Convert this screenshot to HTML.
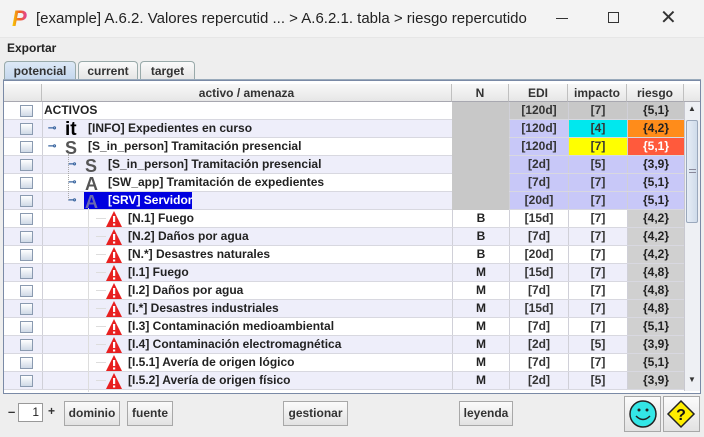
<!DOCTYPE html>
<html><head><meta charset="utf-8"><style>
*{box-sizing:border-box;margin:0;padding:0}
body{width:704px;height:437px;overflow:hidden;background:#eeeeee;font-family:"Liberation Sans",Arial,sans-serif;position:relative}
.abs{position:absolute}
.title{left:0;top:0;width:704px;height:38px;background:#f3f3f3;border-bottom:1px solid #e6e6e6}
.menu{left:0;top:38px;width:704px;height:21px;background:#eeeeee;font-size:12px;font-weight:bold;color:#222;padding:3px 0 0 7px}
.tab{top:61px;height:19px;border:1px solid #9aa;border-bottom:none;border-radius:4px 4px 0 0;font-size:12px;font-weight:bold;color:#333;text-align:center;padding-top:2px;background:linear-gradient(#fafafa,#e4e4e4)}
.tab.sel{background:linear-gradient(#dde9f6,#c2d6ec);height:20px}
.frame{left:3px;top:80px;width:698px;height:314px;border:1px solid #7a8aa6;background:#fff}
.row{position:absolute;left:4px;width:680px;height:18px;font-size:12px;font-weight:bold;color:#222;border-bottom:1px solid #d8d8e0}
.row div{position:absolute;top:0;height:17px;line-height:17px}
.c{text-align:center}
.cb{left:16px;top:3px!important;width:13px;height:12px!important;border:1px solid #8a9ab0;background:linear-gradient(#fff,#cfd9e6)}
.vl{border-left:1px solid #d0d0d8}
.hdr{position:absolute;top:84px;height:18px;background:linear-gradient(#f8f8f8,#e6e6e6);border-right:1px solid #c0c0c0;border-bottom:1px solid #a8a8b0;font-size:12px;font-weight:bold;color:#333;text-align:center;line-height:18px}
.btn{position:absolute;top:401px;height:25px;border:1px solid #a8a8a8;background:linear-gradient(#fbfbfb,#e2e2e2);font-size:12px;font-weight:bold;color:#333;text-align:center;line-height:23px}
</style></head><body>
<div class="abs title"></div>
<div class="abs" style="left:12px;top:6px;font-size:22px;font-weight:bold;font-style:italic;font-family:'Liberation Sans',sans-serif;background:linear-gradient(90deg,#f7d400,#f06020,#e040a0);-webkit-background-clip:text;color:transparent">P</div>
<div class="abs" style="left:36px;top:10px;font-size:15px;color:#222">[example] A.6.2. Valores repercutid ... &gt; A.6.2.1. tabla &gt; riesgo repercutido</div>
<div class="abs" style="left:556px;top:18px;width:12px;height:1px;background:#333"></div>
<div class="abs" style="left:608px;top:12px;width:11px;height:11px;border:1px solid #333"></div>
<div class="abs" style="left:660px;top:5px;font-size:20px;color:#333">✕</div>
<div class="abs menu">Exportar</div>
<div class="abs tab sel" style="left:4px;width:72px">potencial</div>
<div class="abs tab" style="left:78px;width:60px">current</div>
<div class="abs tab" style="left:140px;width:55px">target</div>
<div class="abs" style="left:3px;top:79px;width:698px;height:1px;background:#9ab"></div>
<div class="abs frame"></div>
<div class="hdr" style="left:4px;width:38px"></div>
<div class="hdr" style="left:42px;width:410px">activo / amenaza</div>
<div class="hdr" style="left:452px;width:57px">N</div>
<div class="hdr" style="left:509px;width:59px">EDI</div>
<div class="hdr" style="left:568px;width:59px">impacto</div>
<div class="hdr" style="left:627px;width:57px">riesgo</div>
<div class="hdr" style="left:684px;width:16px;border-right:none"></div>
<div class="abs" style="left:684px;top:102px;width:16px;height:289px;background:#eef0f4;border-left:1px solid #c8c8d0"></div>
<div class="abs" style="left:686px;top:104px;width:12px;height:14px;font-size:8px;text-align:center;color:#333">▲</div>
<div class="abs" style="left:686px;top:120px;width:12px;height:103px;border:1px solid #9aa8bc;background:linear-gradient(90deg,#e6edf6,#cfdbea);border-radius:2px"></div>
<div class="abs" style="left:689px;top:169px;width:7px;height:4px;border-top:1px solid #889;border-bottom:1px solid #889"></div>
<div class="abs" style="left:686px;top:375px;width:12px;height:14px;font-size:8px;text-align:center;color:#333">▼</div>
<div id="rows"></div>
<script>
const L='#c8c8f8',G='#c8c8c8',A='#eeeefa';
const rows=[
["ACTIVOS",0,'',"[120d]","[7]","{5,1}",G,G,G,null,null],
["[INFO] Expedientes en curso",1,'it',"[120d]","[4]","{4,2}",L,'#00e8ee','#ff8c1a'],
["[S_in_person] Tramitación presencial",1,'S',"[120d]","[7]","{5,1}",L,'#ffff00','#ff5a3c','#fff'],
["[S_in_person] Tramitación presencial",2,'S',"[2d]","[5]","{3,9}",L,L,L],
["[SW_app] Tramitación de expedientes",2,'A',"[7d]","[7]","{5,1}",L,L,L],
["[SRV] Servidor",2,'A',"[20d]","[7]","{5,1}",L,L,L,null,1],
["[N.1] Fuego",3,'B',"[15d]","[7]","{4,2}"],
["[N.2] Daños por agua",3,'B',"[7d]","[7]","{4,2}"],
["[N.*] Desastres naturales",3,'B',"[20d]","[7]","{4,2}"],
["[I.1] Fuego",3,'M',"[15d]","[7]","{4,8}"],
["[I.2] Daños por agua",3,'M',"[7d]","[7]","{4,8}"],
["[I.*] Desastres industriales",3,'M',"[15d]","[7]","{4,8}"],
["[I.3] Contaminación medioambiental",3,'M',"[7d]","[7]","{5,1}"],
["[I.4] Contaminación electromagnética",3,'M',"[2d]","[5]","{3,9}"],
["[I.5.1] Avería de origen lógico",3,'M',"[7d]","[7]","{5,1}"],
["[I.5.2] Avería de origen físico",3,'M',"[2d]","[5]","{3,9}"]];
let h='';
rows.forEach((r,i)=>{
 const y=102+i*18, bg=i%2?A:'#fff';
 h+=`<div class="row" style="top:${y}px;background:${bg}">`;
 h+=`<div class="cb"></div><div class="vl" style="left:38px;width:1px"></div>`;
 const lv=r[1];
 if(lv==0){h+=`<div style="left:40px">ACTIVOS</div>`;}
 else if(lv<3){
  const x=lv==1?44:64;
  h+=`<div style="left:${x}px;color:#3a66a0;font-size:10px">⊸</div>`;
  const big=r[2]=='it';
  h+=`<div style="left:${x+17}px;font-size:${big?19:18}px;color:${big?'#000':'#555'};top:${big?0:1}px;line-height:${big?20:19}px;font-weight:bold">${r[2]}</div>`;
  if(r[10]) h+=`<div style="left:80px;width:108px;background:#0000e0"></div><div style="left:${x+17}px;font-size:18px;top:1px;color:#6a6ab0;line-height:19px;font-weight:bold">A</div>`;
  h+=`<div style="left:${x+40}px;${r[10]?'color:#fff':''}">${r[0]}</div>`;
 } else {
  h+=`<div style="left:92px;top:8px!important;width:10px;height:1px!important;background:#ddd"></div>`;
  h+=`<svg style="position:absolute;left:101px;top:0" width="18" height="17"><path d="M9 1 L17 17 L1 17 Z" fill="#e82020"/><rect x="8" y="6" width="2.2" height="6" fill="#fff"/><rect x="8" y="13.5" width="2.2" height="2" fill="#fff"/></svg>`;
  h+=`<div style="left:124px">${r[0]}</div>`;
 }
 if(i<6) h+=`<div style="left:448px;width:57px;height:18px!important;background:${G}"></div>`;
 else h+=`<div class="c vl" style="left:448px;width:57px">${r[2]}</div>`;
 h+=`<div class="c vl" style="left:505px;width:59px;background:${r[6]||'transparent'};color:#333">${r[3]}</div>`;
 h+=`<div class="c vl" style="left:564px;width:59px;background:${r[7]||'transparent'};color:#333">${r[4]}</div>`;
 h+=`<div class="c vl" style="left:623px;width:57px;background:${r[8]||'#d0d0d0'};color:${r[9]||'#222'}">${r[5]}</div>`;
 h+='</div>';
});
document.getElementById('rows').innerHTML=h;
</script>
<div class="abs" style="left:68px;top:154px;width:1px;height:46px;border-left:1px dotted #aaa"></div>
<div class="abs" style="left:88px;top:208px;width:1px;height:184px;border-left:1px solid #ddd"></div>
<div class="abs" style="left:0;top:394px;width:704px;height:43px;background:#eeeeee"></div>
<div class="abs" style="left:8px;top:404px;font-size:13px;font-weight:bold;color:#333">–</div>
<div class="abs" style="left:18px;top:403px;width:25px;height:19px;border:1px solid #999;background:#fff;font-size:12px;text-align:right;padding-right:3px;line-height:17px;color:#222">1</div>
<div class="abs" style="left:48px;top:404px;font-size:12px;font-weight:bold;color:#333">+</div>
<div class="btn" style="left:64px;width:56px">dominio</div>
<div class="btn" style="left:127px;width:46px">fuente</div>
<div class="btn" style="left:283px;width:65px">gestionar</div>
<div class="btn" style="left:459px;width:54px">leyenda</div>
<div class="btn" style="left:624px;top:396px;width:37px;height:36px"></div>
<div class="btn" style="left:663px;top:396px;width:37px;height:36px"></div>
<svg class="abs" style="left:628px;top:399px" width="30" height="30"><circle cx="15" cy="15" r="13" fill="#33e6e6" stroke="#222" stroke-width="1.5"/><circle cx="11" cy="11" r="1.5" fill="#222"/><circle cx="19" cy="11" r="1.5" fill="#222"/><path d="M8 17 Q15 24 22 17" stroke="#222" stroke-width="1.5" fill="none"/></svg>
<svg class="abs" style="left:666px;top:399px" width="30" height="30"><path d="M15 2 L28 15 L15 28 L2 15 Z" fill="#ffee00" stroke="#222" stroke-width="1.5"/><text x="15" y="21" font-family="Liberation Sans" font-weight="bold" font-size="16" text-anchor="middle" fill="#111">?</text></svg>
</body></html>
